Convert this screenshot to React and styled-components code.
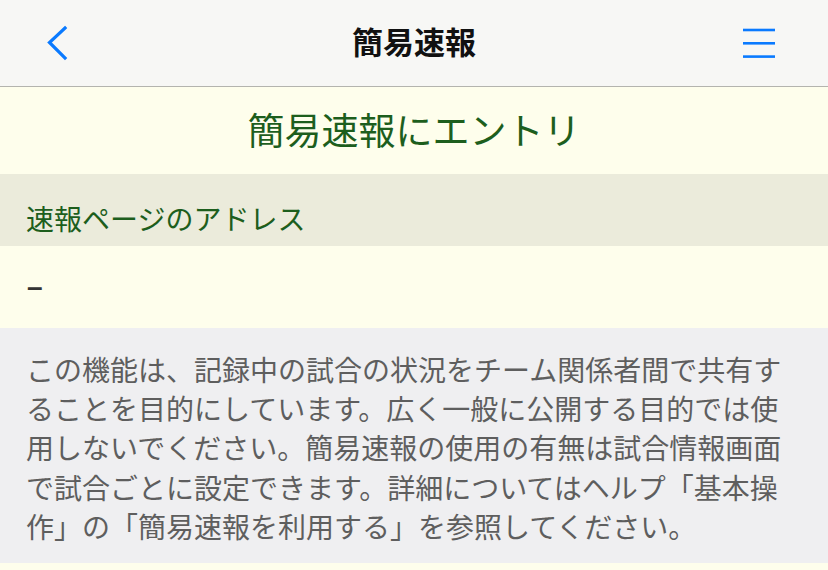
import React from "react";
import styled, { createGlobalStyle } from "styled-components";

const GlobalStyle = createGlobalStyle`
  html, body {
    margin: 0;
    padding: 0;
    background: #fefeec;
  }
  body {
    font-family: "Noto Sans CJK JP", "Noto Sans", sans-serif;
  }
`;

const Page = styled.div`
  width: 828px;
  min-height: 570px;
  background: #fefeec;
`;

const NavBar = styled.header`
  height: 86px;
  display: flex;
  align-items: center;
  justify-content: space-between;
  padding: 0 53px 0 44px;
  background: #f7f7f5;
  border-bottom: 1px solid #b4b4ae;
  position: relative;
`;

const NavTitle = styled.h1`
  position: absolute;
  left: 0;
  right: 0;
  top: 19px;
  margin: 0;
  text-align: center;
  font-size: 31px;
  line-height: 44px;
  font-weight: 700;
  color: #111;
  pointer-events: none;
`;

const IconButton = styled.button`
  border: none;
  background: none;
  padding: 0;
  display: flex;
  color: #0a7aff;
  cursor: pointer;
`;

const Banner = styled.div`
  height: 87px;
  box-sizing: border-box;
  padding-bottom: 4px;
  display: flex;
  align-items: center;
  justify-content: center;
  font-size: 37px;
  color: #1d5e1d;
  background: #fefeec;
`;

const SectionHeader = styled.div`
  height: 72px;
  box-sizing: border-box;
  padding: 25px 26px 0;
  font-size: 28px;
  line-height: 39px;
  color: #1d5e1d;
  background: #ebebdb;
`;

const ValueRow = styled.div`
  height: 82px;
  display: flex;
  align-items: center;
  padding: 0 27px;
  font-family: "Liberation Sans", sans-serif;
  font-size: 28px;
  font-weight: 700;
  color: #333;
  background: #fefeec;
`;

const Note = styled.p`
  margin: 0;
  padding: 22px 26px 17px;
  font-size: 28px;
  line-height: 39.2px;
  color: #5e5e5e;
  background: #efeff1;
  line-break: strict;
`;

function BackIcon() {
  return (
    <svg width="24" height="36" viewBox="0 0 24 36">
      <path
        d="M21 3 L5.5 17.5 L21 33"
        fill="none"
        stroke="currentColor"
        strokeWidth="3.2"
        strokeLinecap="square"
      />
    </svg>
  );
}

function MenuIcon() {
  return (
    <svg width="32" height="32" viewBox="0 0 32 32">
      <g stroke="currentColor" strokeWidth="2.6">
        <line x1="0" y1="3" x2="32" y2="3" />
        <line x1="0" y1="16.3" x2="32" y2="16.3" />
        <line x1="0" y1="29.6" x2="32" y2="29.6" />
      </g>
    </svg>
  );
}

export default function App() {
  return (
    <Page>
      <GlobalStyle />
      <NavBar>
        <IconButton aria-label="戻る">
          <BackIcon />
        </IconButton>
        <NavTitle>簡易速報</NavTitle>
        <IconButton aria-label="メニュー">
          <MenuIcon />
        </IconButton>
      </NavBar>
      <Banner>簡易速報にエントリ</Banner>
      <SectionHeader>速報ページのアドレス</SectionHeader>
      <ValueRow>–</ValueRow>
      <Note>
        この機能は、記録中の試合の状況をチーム関係者間で共有することを目的にしています。広く一般に公開する目的では使用しないでください。簡易速報の使用の有無は試合情報画面で試合ごとに設定できます。詳細についてはヘルプ「基本操作」の「簡易速報を利用する」を参照してください。
      </Note>
    </Page>
  );
}
